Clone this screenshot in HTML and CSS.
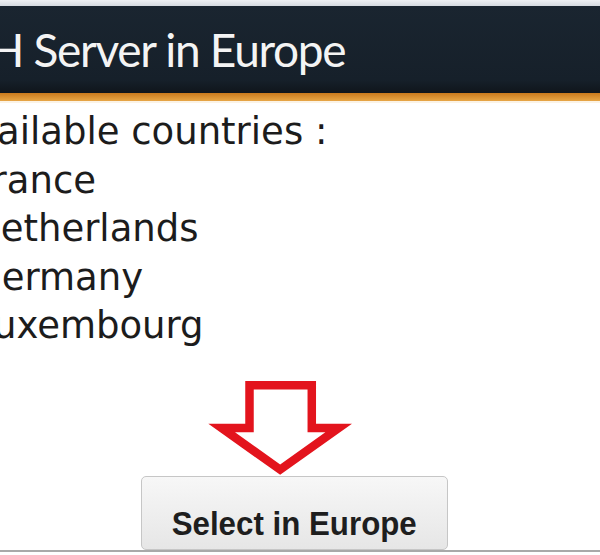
FILE: index.html
```html
<!DOCTYPE html>
<html lang="en">
<head>
    <meta charset="UTF-8">
    <title>SSH Server in Europe</title>
    <link rel="stylesheet" href="styles.css">
</head>
<body>

<div class="pagina">
    <!-- Cabecera -->
    <div class="franja"></div>
    <div class="barra-titulo">
        <h1 class="titulo">SSH Server in Europe</h1>
    </div>
    <div class="linea-naranja"></div>

    <!-- Lista de paises -->
    <div class="paises">
        <p class="etiqueta">Available countries :</p>
        <ul class="lista">
            <li>France</li>
            <li>Netherlands</li>
            <li>Germany</li>
            <li>Luxembourg</li>
        </ul>
    </div>

    <!-- Flecha y boton -->
    <div class="accion">
        <svg class="flecha" width="150" height="108" viewBox="0 0 150 108">
            <polygon points="39.5,6.5 105.5,6.5 105.5,52 134,52 72,96 10,52 39.5,52"
                     fill="none" stroke="#e3141d" stroke-width="9" stroke-linejoin="miter"/>
        </svg>
        <button class="boton"><span class="boton-texto">Select in Europe</span></button>
    </div>
</div>

</body>
</html>
```

FILE: styles.css
```css
body {
    margin: 0;
    padding: 0;
    background: #ffffff;
    overflow: hidden;
    height: 555px;
}

.pagina {
    width: 600px;
}

/* Cabecera */
.franja {
    height: 6px;
    background: linear-gradient(#eef0f3, #d5dae0);
}

.barra-titulo {
    height: 87px;
    background: linear-gradient(#1a2530, #16202a 85%, #0f151b);
    display: flex;
    align-items: center;
    overflow: hidden;
}

.titulo {
    margin: 0 0 0 -58px;
    font-family: Lato, sans-serif;
    font-weight: normal;
    font-size: 46px;
    letter-spacing: -1.3px;
    color: #f4f4f4;
    white-space: nowrap;
}

.linea-naranja {
    height: 8px;
    background: linear-gradient(#c9791c, #e7a646);
    border-bottom: 2px solid #fbf3e6;
}

/* Paises */
.paises {
    font-family: "DejaVu Sans", sans-serif;
    font-size: 37px;
    line-height: 48.5px;
    color: #1c1c1c;
    overflow: hidden;
    padding-top: 5px;
}

.etiqueta {
    margin: 0 0 0 -48px;
    white-space: nowrap;
}

.lista {
    list-style: none;
    margin: 0 0 0 -27px;
    padding: 0;
}

/* Accion */
.accion {
    display: flex;
    flex-direction: column;
    align-items: flex-start;
    margin-top: 28px;
    border-bottom: 2px solid #a9a9a9;
    height: 171px;
}

.flecha {
    margin-left: 208px;
    display: block;
}

.boton {
    margin-left: 141px;
    margin-top: -4px;
    width: 307px;
    height: 76px;
    padding: 22px 0 0;
    position: relative;
    z-index: 1;
    background: linear-gradient(#f7f7f7, #e6e6e6);
    border: 1px solid #c6c6c6;
    border-radius: 5px;
    font-family: "Liberation Sans", Arial, sans-serif;
    font-weight: bold;
    font-size: 34px;
    color: #1e1e1e;
}

.boton-texto {
    display: inline-block;
    transform: scaleX(0.92);
}
```
